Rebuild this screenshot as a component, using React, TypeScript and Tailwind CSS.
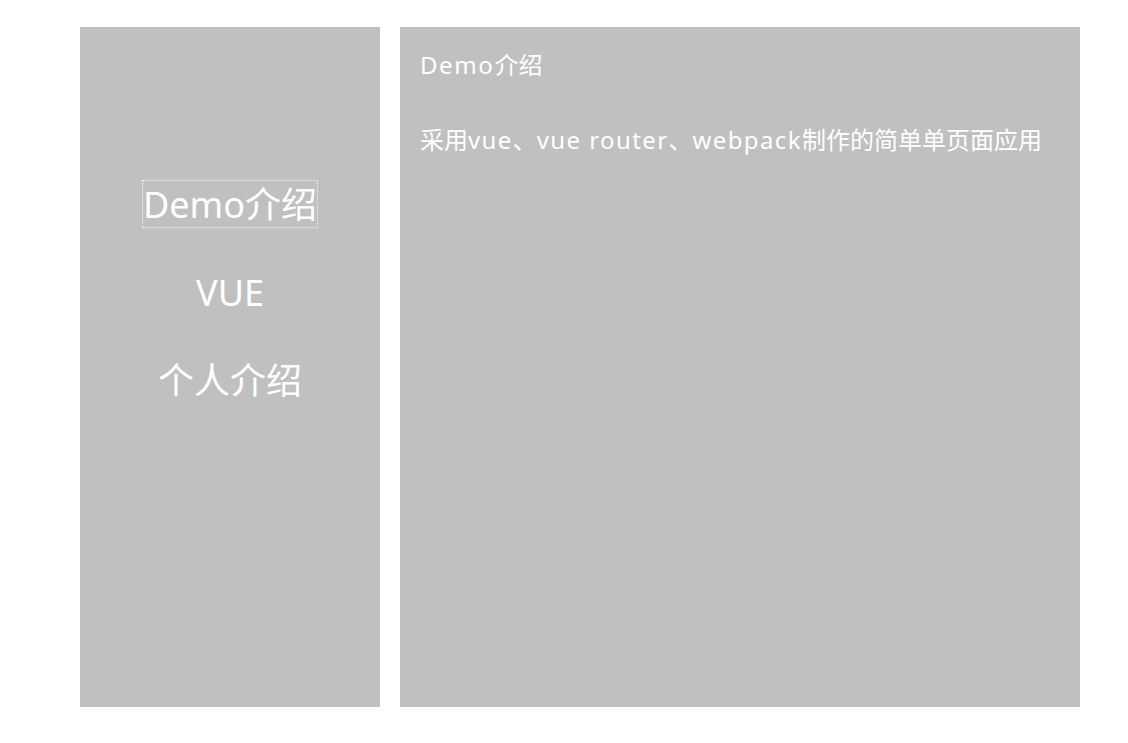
import React, {useState} from 'react';

const navItems = ["Demo介绍", "VUE", "个人介绍"];

const App = () => {

  // States
  const [active, setActive] = useState<number>(0);

  return (
    <div
      className="w-full min-h-[743px] bg-white"
      style={{fontFamily: '"Noto Sans", "Noto Sans CJK SC", sans-serif'}}
    >
      <div className="flex gap-[20px] pt-[27px] pl-[80px]">

        {/* Nav */}
        <div className="w-[300px] h-[680px] bg-[#c0c0c0] flex flex-col items-center pt-[153px] gap-[40px]">
          {navItems.map((item, i) => (
            <a
              key={item}
              href="#"
              onClick={(e) => {
                e.preventDefault();
                setActive(i);
              }}
              className={`h-[48px] pt-[2px] flex items-center text-[36px] leading-[48px] text-white no-underline border border-dotted ${active === i ? 'border-[#f4f4f4]' : 'border-transparent'}`}
            >
              {item}
            </a>
          ))}
        </div>

        {/* Content */}
        <div className="w-[680px] h-[680px] bg-[#c0c0c0] px-[20px] pt-[20px] text-white">
          <h2 className="text-[24px] leading-[36px] font-normal">
            <span className="tracking-[1.6px]">Demo</span>介绍
          </h2>
          <p className="mt-[39px] text-[24px] leading-[36px] whitespace-nowrap">
            采用<span className="tracking-[1.4px]">vue</span>、<span className="tracking-[1.4px]">vue router</span>、<span className="tracking-[1.4px]">webpack</span>制作的简单单页面应用
          </p>
        </div>

      </div>
    </div>
  );
};

export default App;
